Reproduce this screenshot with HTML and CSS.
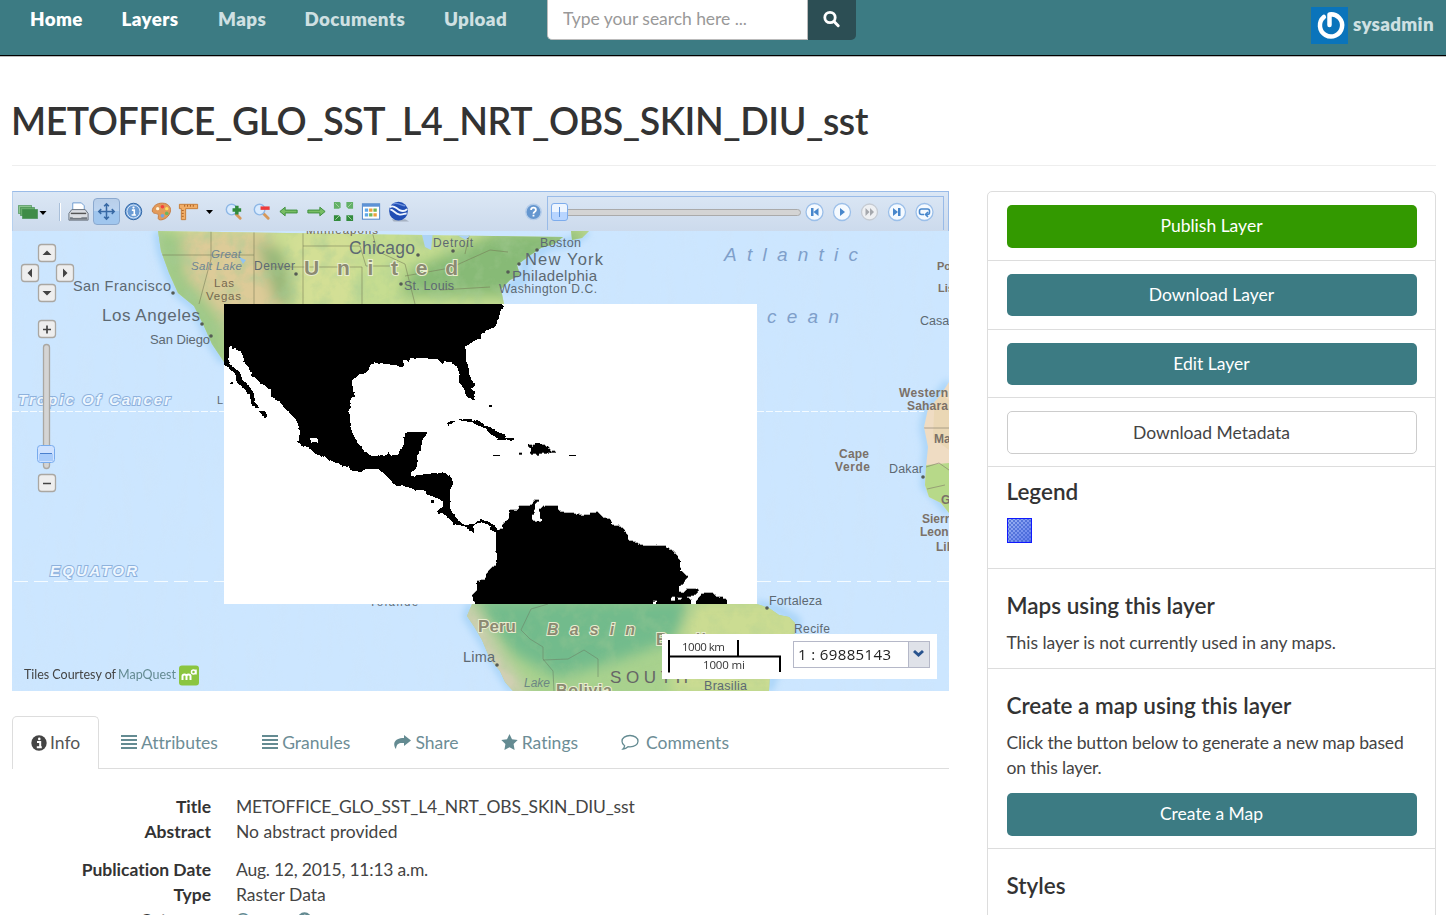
FILE: index.html
```html
<!DOCTYPE html>
<html lang="en">
<head>
<meta charset="utf-8">
<title>METOFFICE_GLO_SST_L4_NRT_OBS_SKIN_DIU_sst</title>
<link rel="stylesheet" href="styles.css">
</head>
<body>
<header class="navbar">
  <nav class="nav">
    <a class="on" style="width:54px">Home</a><a class="on" style="width:59px">Layers</a><a style="width:49px">Maps</a><a style="width:102px">Documents</a><a style="width:65px">Upload</a>
  </nav>
  <form class="search">
    <input type="text" placeholder="Type your search here ...">
    <button type="button" aria-label="Search"><svg width="18" height="18" viewBox="0 0 18 18"><circle cx="7" cy="7.500" r="5.200" fill="none" stroke="#fff" stroke-width="2.800"/><path d="M11 11.500l4.200 4.200" stroke="#fff" stroke-width="3" stroke-linecap="round"/></svg></button>
  </form>
  <div class="user">
    <svg width="37" height="37" viewBox="0 0 38 38"><rect width="38" height="38" fill="#0a74bb"/><path d="M13.2 10.200A11.400 11.400 0 1 0 19 7.600V18.500" fill="none" stroke="#fff" stroke-width="4.600" stroke-linecap="round" stroke-linejoin="round"/></svg>
    <span>sysadmin</span>
  </div>
</header>

<div class="page">
  <div class="page-header"><h2>METOFFICE_GLO_SST_L4_NRT_OBS_SKIN_DIU_sst</h2></div>
  <div class="columns">
    <main class="main">
      <section class="viewer">
        <div class="toolbar">
          <span class="cell layers"><svg width="30" height="24" viewBox="0 0 30 24"><g stroke="#3c8a49" stroke-opacity=".6"><rect x="1.500" y="5.500" width="13" height="8" fill="#8cc48e"/><rect x="3.500" y="7.500" width="14" height="8" fill="#69ad6c"/><rect x="5.500" y="9.500" width="15" height="9" fill="#3f8c48"/></g><path d="M22.500 11h7l-3.500 4z" fill="#000"/></svg></span>
          <span class="sep"></span>
          <span class="cell"><svg viewBox="0 0 24 24"><path d="M6 12V3h9l3 3v6z" fill="#fff" stroke="#6d9bd0"/><path d="M5 10h14l3 4v7H2v-7z" fill="#d9dde2" stroke="#66717d"/><path d="M4 14h16" stroke="#555" stroke-width="1.500"/><path d="M3 18h18v2.500H3z" fill="#737a82"/><path d="M6 18h9" stroke="#eee"/></svg></span>
          <span class="cell active"><svg viewBox="0 0 24 24"><path d="M12 4v16M4 12h16M9.500 6.500L12 4l2.500 2.500M9.500 17.500L12 20l2.500-2.500M6.500 9.500L4 12l2.500 2.500M17.500 9.500L20 12l-2.500 2.500" fill="none" stroke="#3869a4" stroke-width="1.600"/></svg></span>
          <span class="cell"><svg viewBox="0 0 24 24"><circle cx="12" cy="12" r="8.600" fill="#6b9cd5" stroke="#2e64a4"/><circle cx="12" cy="12" r="6.800" fill="none" stroke="#dceafa"/><path d="M10.300 10.600h2.500v4.800M10 15.600h4.500" fill="none" stroke="#fff" stroke-width="1.700"/><circle cx="12" cy="7.900" r="1.200" fill="#fff"/></svg></span>
          <span class="cell"><svg viewBox="0 0 24 24"><path d="M2.500 10C4 5 9 2.500 15 3.500c5 1 7.500 5 6 9.500-2 6-8 8.500-11.500 7.500-2-1 0-4-1-5.500-1.500-1.500-7 0-6-5z" fill="#e29a5b" stroke="#c57b42"/><circle cx="8" cy="9" r="1.700" fill="#fff5d8"/><circle cx="13" cy="7" r="1.900" fill="#f5423b"/><circle cx="17.500" cy="9" r="1.800" fill="#ffe15b"/><circle cx="17.500" cy="14" r="1.900" fill="#70b45f"/><circle cx="13" cy="16.500" r="1.900" fill="#75a5e1"/></svg></span>
          <span class="cell"><svg viewBox="0 0 24 24"><path d="M2.500 4.500h19v4.500H9v11.500H4.500V9h-2z" fill="#f1ae68" stroke="#c57c37"/><path d="M8 5v2M11 5v2M14 5v2M17 5v2M5 11h2M5 14h2M5 17h2" stroke="#a95e22"/></svg></span>
          <span class="caret"><svg width="8" height="5"><path d="M0 0h7l-3.500 4z"/></svg></span>
          <span class="cell"><svg viewBox="0 0 24 24"><path d="M14 14l5 5" stroke="#d6985a" stroke-width="3" stroke-linecap="round"/><circle cx="10" cy="10" r="5.500" fill="#d8ebff" stroke="#8fb8e6" stroke-width="1.500"/><path d="M15.500 6v9M11 10.500h9" stroke="#318a3b" stroke-width="3.600"/></svg></span>
          <span class="cell"><svg viewBox="0 0 24 24"><path d="M14 14l5 5" stroke="#d6985a" stroke-width="3" stroke-linecap="round"/><circle cx="10" cy="10" r="5.500" fill="#d8ebff" stroke="#8fb8e6" stroke-width="1.500"/><path d="M11 8.500h9.500" stroke="#ee3b3b" stroke-width="3.600"/></svg></span>
          <span class="cell"><svg viewBox="0 0 24 24"><path d="M3 12l5.500-4.500v3H21v3H8.500v3z" fill="#78bd65" stroke="#3c8e3c"/></svg></span>
          <span class="cell"><svg viewBox="0 0 24 24"><path d="M21 12l-5.500-4.500v3H3v3h12.500v3z" fill="#78bd65" stroke="#3c8e3c"/></svg></span>
          <span class="cell"><svg viewBox="0 0 24 24"><g fill="#62b067"><path d="M2 2h6l1 1v5l-2 1H2zM15 2h7v7h-5l-2-2z"/><path d="M2 16h5l2 2v4H2zM15 16h7v6h-7z" fill="#328b3c"/></g><path d="M3.500 3.500l4 4M20.500 3.500l-4 4M3.500 20.500l4-4M20.500 20.500l-4-4" stroke="#a5d3a0"/></svg></span>
          <span class="cell"><svg viewBox="0 0 24 24"><rect x="2.500" y="4" width="18" height="16" fill="#fff" stroke="#4b83c8"/><path d="M2.500 5.500h18" stroke="#5d92d6" stroke-width="3"/><path d="M5 10.500h3.500M5 15.500h3.500" stroke="#5fa8e8" stroke-width="3.500"/><path d="M9.500 10.500H13M14 15.500h3.500" stroke="#eea13d" stroke-width="3.500"/><path d="M14 10.500h3.500M9.500 15.500H13" stroke="#73b653" stroke-width="3.500"/></svg></span>
          <span class="cell"><svg viewBox="0 0 24 24"><path d="M5 20h14l4 2.500H7z" fill="#8a94a3" opacity=".6"/><circle cx="12" cy="11.500" r="9.800" fill="#214eb4"/><path d="M3 7.500c4-3 6 1 10 3s6 1 8-1M3.500 10c3 0 5 4 9 5 3 1 6-1 8-1" stroke="#eef5ff" stroke-width="2" fill="none"/><path d="M6 4c5-2 9 2 13 2" stroke="#6b90dc" stroke-width="1.500" fill="none"/></svg></span>
          <span class="spacer"></span>
          <span class="cell"><svg viewBox="0 0 24 24"><circle cx="12" cy="12.500" r="8" fill="#6496cf" stroke="#b5cdea" stroke-width="1.500"/><path d="M9.500 10.500c0-3.300 5-3.300 5 0 0 2-2.500 1.500-2.500 3.800M12 15.500v1.800" fill="none" stroke="#fff" stroke-width="1.900"/></svg></span>
          <div class="time">
            <div class="slide"><span class="thumb"></span></div>
            <svg class="play" width="132" height="24" viewBox="0 0 132 24"><g fill="#f5faff" stroke="#9bbfe9" stroke-width="1.300"><circle cx="10.500" cy="12" r="8.500"/><circle cx="38" cy="12" r="8.500"/><circle cx="65.500" cy="12" r="8" fill="#eef0f3" stroke="#c5cbd3"/><circle cx="93" cy="12" r="8.500"/><circle cx="120.500" cy="12" r="8.500"/></g><g fill="#4887cc"><path d="M7 8h2.500v8H7zM14.500 8v8l-5-4zM36 8l5 4-5 4zM89 8l5 4-5 4zM94 8h2.500v8h-2.500z"/><path d="M61.500 8l4 4-4 4zM66 8l4 4-4 4z" fill="#a5a8ad"/></g><path d="M120 14.500h-2.500q-2 0-2-2v-1.500q0-2 2-2h6q2 0 2 2v1.500q0 2-2 2H122m2-2.500l-2.500 2.500 2.500 2.500" fill="none" stroke="#4887cc" stroke-width="1.600"/></svg>
          </div>
        </div>
        <svg class="map" width="937" height="460" viewBox="12 231 937 460">
          <defs>
            <filter id="b6" x="-40%" y="-40%" width="180%" height="180%"><feGaussianBlur stdDeviation="7"/></filter>
            <filter id="b3"><feGaussianBlur stdDeviation="3.500"/></filter>
            <filter id="relief" x="0" y="0" width="100%" height="100%"><feTurbulence type="fractalNoise" baseFrequency=".06" numOctaves="4" seed="4"/><feColorMatrix values="0 0 0 0 .38  0 0 0 0 .6  0 0 0 0 .3  2.200 0 0 0 -.95"/></filter>
            <filter id="waves" x="0" y="0" width="100%" height="100%"><feTurbulence type="fractalNoise" baseFrequency=".09 .02" numOctaves="3" seed="9"/><feColorMatrix values="0 0 0 0 .62  0 0 0 0 .78  0 0 0 0 .95  1.400 0 0 0 -.56"/></filter>
            <filter id="rag" x="-2%" y="-2%" width="104%" height="104%"><feTurbulence type="fractalNoise" baseFrequency=".22" numOctaves="1" seed="2"/><feDisplacementMap in="SourceGraphic" scale="3" xChannelSelector="R" yChannelSelector="G"/></filter>
            <clipPath id="na"><path d="M158 231l3 20 8 22 9 20 16 13 9 18 9 20 12 18V304h280l-3-15 9-9 10-5-3-10 12-9 12-8 13-4 9-7zM572 240l10-2 7-7h-18z"/></clipPath>
            <clipPath id="sa"><path d="M472 604l-5 12 8 12 7 12 8 19 10 12 5 11 8 9h256l1-20 7-16 17-12 1-20-6-6-10-2-10-7-12-4z"/></clipPath>
            <clipPath id="af"><path d="M949 382l-9 14-12 13-4 18 4 20-2 20-1 18 4 12 12 6 8 10z"/></clipPath>
            <clipPath id="raster"><rect x="224" y="304" width="533" height="300"/></clipPath>
          </defs>
          <rect x="12" y="231" width="937" height="460" fill="#cce6ff"/>
          <rect x="12" y="231" width="937" height="460" filter="url(#waves)" opacity=".6"/>
          <g fill="none" stroke="#a9d4f8" stroke-width="9" filter="url(#b3)"><path d="M158 231l3 20 8 22 9 20 16 13 18 38 12 18M505 290l20-12 0-18 25-14 22-4 15-11M472 604l-5 12 15 24 18 31 13 20M757 604l22 6 17 10-1 18-18 30-9 23M949 382l-21 27-4 18 4 20-3 38 16 18 8 10"/></g>
          <g clip-path="url(#na)">
            <rect x="150" y="231" width="450" height="135" fill="#c6dd91"/>
            <g filter="url(#b6)"><path d="M150 231h35l10 35 30 30 5 70h-40z" fill="#9fc987"/><path d="M182 231h85l35 60-60 60-25-40-30-35z" fill="#ddcb98"/><path d="M255 240l28 10 18 54h-25z" fill="#96b779"/><path d="M285 231h70v80h-60z" fill="#d3df95"/><path d="M410 270l90-39h90l-70 65h-120z" fill="#87ba76"/></g>
            <rect x="150" y="231" width="450" height="135" filter="url(#relief)" opacity=".55"/>
            <path d="M161 255h93M211 231v28l-12 45M254 231v73M303 231v73M303 246h57l6 20h28M272 267h90v37M372 231l5 20 28 13 10 40M405 276l45-8 40-18 18 2M440 290l50-3M470 231l-5 23" fill="none" stroke="#747a56" stroke-opacity=".55"/>
            <path d="M421 231l4 16 6 3 2-19zM450 231l16 9 8-9z" fill="#acd3f5"/>
            <path d="M239 257l7 3-3 4z" fill="#91c4f1"/>
          </g>
          <g clip-path="url(#sa)">
            <rect x="460" y="600" width="350" height="95" fill="#a9d28e"/>
            <g filter="url(#b6)"><path d="M475 600h220l-22 40-55 20-60 18-45-25z" fill="#72bb8c"/><path d="M690 600h120v95h-140z" fill="#cbdc92"/><path d="M455 605l18 0 28 50 30 40h-30z" fill="#d5cfb7"/></g>
            <rect x="460" y="600" width="350" height="95" filter="url(#relief)" opacity=".35"/>
            <path d="M548 604l-17 5-10 21 9 9 13 8v12l10 12 1 20M543 660l25-1 16-9 14 9v18" fill="none" stroke="#6d8569" stroke-opacity=".6"/>
          </g>
          <g clip-path="url(#af)"><rect x="915" y="380" width="40" height="140" fill="#efdcc3"/><path d="M915 466l34-3v60h-34z" fill="#b7d989"/><path d="M935 390l14 10v50l-16-12z" fill="#ead7b5"/><path d="M924 428h25M926 467l13-4 10 7M927 489l18-4" fill="none" stroke="#817a68" stroke-opacity=".6"/></g>
          <path d="M12 411.500h212M757 411.500h167" stroke="#f4fbff" stroke-dasharray="7 2"/>
          <path d="M14 581.500h210M757 581.500h192" stroke="#f4fbff" stroke-dasharray="14 6"/>
          <g class="lbl">
            <g font-size="11.500" fill="#75684f"><text x="306" y="234" textLength="72">Minneapolis</text><text x="211" y="258" font-style="italic" textLength="30" fill="#6d8594">Great</text><text x="191" y="270" font-style="italic" textLength="51" fill="#6d8594">Salt Lake</text><text x="214" y="287" textLength="20">Las</text><text x="206" y="300" textLength="35">Vegas</text></g>
            <text x="254" y="270" font-size="12" textLength="41">Denver</text><text x="349" y="254" font-size="17.500" textLength="66">Chicago</text><text x="433" y="247" font-size="12" textLength="40">Detroit</text><text x="540" y="247" font-size="12.500" textLength="41">Boston</text><text x="525" y="265" font-size="16.500" textLength="78">New York</text><text x="512" y="281" font-size="15" textLength="85">Philadelphia</text><text x="499" y="293" font-size="12" textLength="98">Washington D.C.</text><text x="404" y="290" font-size="12.500" textLength="50">St. Louis</text>
            <text x="73" y="291" font-size="14.500" textLength="98">San Francisco</text><text x="102" y="321" font-size="17" textLength="98">Los Angeles</text><text x="150" y="344" font-size="13" textLength="60">San Diego</text><text x="217" y="404" font-size="11">L</text>
            <text class="country" x="304" y="275" font-size="21" textLength="154">United</text>
            <g font-style="italic" fill="#7f9fca"><text x="724" y="261" font-size="19" textLength="134">Atlantic</text><text x="767" y="323" font-size="19" textLength="72">cean</text></g>
            <g class="lat" font-size="15" font-style="italic" font-weight="bold"><text x="18" y="405" textLength="152">Tropic Of Cancer</text><text x="50" y="576" textLength="87">EQUATOR</text></g>
            <g fill="#7b7168" font-weight="bold" font-size="12"><text x="937" y="270" font-size="11">Po</text><text x="938" y="292" font-size="11">Lis</text><text x="899" y="397" textLength="49">Western</text><text x="907" y="410" textLength="41">Sahara</text><text x="934" y="443">Ma</text><text x="839" y="458" textLength="30">Cape</text><text x="835" y="471" textLength="35">Verde</text><text x="941" y="504">G</text><text x="922" y="523">Sierr</text><text x="920" y="536">Leon</text><text x="936" y="551">Lil</text></g>
            <text x="920" y="325" font-size="12.500">Casa</text><text x="889" y="473" font-size="12.500" textLength="34">Dakar</text><text x="769" y="605" font-size="12.500" textLength="53">Fortaleza</text><text x="794" y="633" font-size="12" textLength="36">Recife</text>
            <text x="369" y="606" font-size="11" textLength="49">Yolande</text><text class="country" x="478" y="632" font-size="17" textLength="38">Peru</text><text class="country" x="547" y="635" font-size="16" font-style="italic" textLength="88">Basin</text><text class="country" x="656" y="645" font-size="16" textLength="50">Brazil</text><text x="463" y="662" font-size="14.500" textLength="32">Lima</text><text x="524" y="687" font-size="12" font-style="italic" textLength="26" fill="#6c8783">Lake</text><text class="country" x="556" y="696" font-size="16" textLength="56">Bolivia</text><text x="610" y="683" font-size="17" textLength="78" fill="#666">SOUTH</text><text x="704" y="690" font-size="12.500" textLength="43">Brasilia</text>
            <g fill="#555c55"><circle cx="173" cy="293" r="1.800"/><circle cx="202" cy="324" r="1.800"/><circle cx="211" cy="336" r="1.800"/><circle cx="296" cy="274" r="1.800"/><circle cx="401" cy="284" r="1.800"/><circle cx="418" cy="255" r="1.800"/><circle cx="453" cy="251" r="1.800"/><circle cx="537" cy="250" r="1.800"/><circle cx="519" cy="264" r="1.800"/><circle cx="508" cy="272" r="1.800"/><circle cx="923" cy="477" r="1.800"/><circle cx="767" cy="608" r="1.800"/><circle cx="497" cy="665" r="1.800"/></g>
          </g>
          <rect x="224" y="304" width="533" height="300" fill="#fff"/>
          <g clip-path="url(#raster)" shape-rendering="crispEdges">
          <g filter="url(#rag)">
            <g transform="translate(220 295) scale(.33333)">
              <path d="M0 10H842V30L852 38 842 45 835 80 822 98 795 108 778 130 750 145 738 155 737 195 745 215 748 240 760 262 762 275 752 280 765 290 765 300 760 318 750 308 737 300 735 288 725 270 718 262V235L713 220 700 208 690 200 672 202 668 208 655 193 620 190 570 190 566 200 555 193 550 200 552 214 540 217 530 210 505 210 490 205 478 203 450 208 447 225 435 235 415 238 405 245 397 260 398 285 405 305 395 310 388 345 390 390 400 420 410 440 430 465 455 484 500 480 505 473 512 482 535 480 540 462 550 455 555 415 570 410 622 410 618 422 605 438 604 465 590 485 590 515 575 530 572 543 600 540 628 535 678 535 695 550 698 570 690 590 690 640 705 665 730 688 760 688 770 680 785 675 805 680 825 692 832 705 845 705 838 716 820 708 808 704 812 694 800 688 785 682 768 686 760 695 762 714 755 708 742 704 742 696 725 692 705 688 690 674 675 662 668 652 655 658 652 650 660 640 670 635 670 620 650 608 620 598 615 585 590 585 560 575 530 572 515 560 500 545 485 530 475 522 440 522 420 531 400 527 385 517 355 508 325 493 310 485 285 477 270 462 245 452 235 442 238 425 240 410 235 390 225 370 195 340 180 322 155 308 152 290 135 270 120 262 95 240 85 215 75 205 68 180 62 168 50 165 45 158 38 162 35 153 28 155 28 208 45 220 60 232 68 255 85 270 100 292 105 318 118 340 107 340 95 330 88 295 72 280 50 262 48 238 28 218 0 205Z"/>
              <path d="M120 348l12 2 8 8v8l-5 6-4-12zM32 260h7v7h-7zM634 616h8v7h-8zM808 330h7v7h-7zM682 385l10-8 15 0-10 8-12 8zM718 371l35 2 28 6 10 12 20 6 22 14 22 8 5 10h22v7h-50l-3-10-20-10-12-16-22-8-16-10-40-6z"/>
              <path d="M271 428h22v12h-22z" fill="#fff"/>
            </g>
            <g transform="translate(460 380) scale(.33333)">
              <path d="M109 455L125 445V433L145 420 150 390 175 388 180 378 215 375 222 362 236 356 236 364 226 370 226 385 217 405V420L228 425 242 424 240 395 235 388 255 378 290 378 298 392 318 398 345 398 350 405 388 405 392 398 412 396 430 412 452 418 458 435 475 438 490 445 503 465 505 480 525 485 545 495 575 498 615 498 635 510 655 528 660 540 662 570 672 580 685 590 675 602 668 612 660 620 655 632 670 640 685 625 717 628 712 640 698 648 680 650 695 660 690 690H45L40 662 36 645 50 632 50 602 75 598 80 580 92 565 108 555 112 535 109 515ZM708 664l18-24 32-2 12 10 30 10v30h-92zM204 192l15 4 10-5 22 2 10 8 12 10 16 3v3l-20 1-10 6-8-5-12 1-3 8-6-2-5-7-8 6-6-5 2-16-9-5zM178 218h8v7h-8z"/>
              <path d="M635 650l12 2-4 10h-10zM655 652l12 2-5 6h-10zM578 663h14v10h-14z" fill="#fff"/>
            </g>
          </g>
          <path d="M493 455h7v1h-7zM569 455h7v1h-7z"/>
          </g>
          <g class="controls">
            <g fill="#eee" stroke="#aaa7a2" stroke-width="1.300"><rect x="38.500" y="244.500" width="17" height="17" rx="3"/><rect x="21.500" y="264.500" width="17" height="17" rx="3"/><rect x="56.500" y="264.500" width="17" height="17" rx="3"/><rect x="38.500" y="284.500" width="17" height="17" rx="3"/><rect x="38.500" y="320.500" width="17" height="17" rx="3"/><rect x="38.500" y="474.500" width="17" height="17" rx="3"/><rect x="43.500" y="344.500" width="6" height="124" rx="3" fill="#d4d4d4"/></g>
            <path d="M42.500 255l4.500-4.500 4.500 4.500zM32 268.500v9l-4.500-4.500zM63 268.500v9l4.500-4.500zM42.500 291l4.500 4.500 4.500-4.500z" fill="#444"/><path d="M43 329.500h8M47 325.500v8M43 483.500h8" stroke="#444" stroke-width="1.700"/>
            <rect x="37.500" y="445.500" width="17" height="17" rx="3" fill="#cfe2ff" stroke="#78abed"/><rect x="39" y="454" width="14" height="7" fill="#a9ccfb"/><path d="M40 453.500h12" stroke="#4a80ce"/>
          </g>
          <text x="24" y="679" class="credit" textLength="92">Tiles Courtesy of</text><text x="118" y="679" class="credit link" textLength="58">MapQuest</text>
          <rect x="179" y="665.500" width="20" height="20" rx="3" fill="#8bc540"/><path d="M182.500 680v-4q0-1.500 2-1.500t2 1.500v4m0-4q0-1.500 2-1.500t2 1.500v4" fill="none" stroke="#fff" stroke-width="2"/><circle cx="193.500" cy="672" r="2" fill="none" stroke="#fff" stroke-width="1.500"/><path d="M196 669.500v5" stroke="#fff" stroke-width="1.500"/>
          <rect x="662" y="634" width="275" height="45" fill="#fff"/>
          <path d="M669 640v32.500M668 656.500h112v15.500M738 640v16" fill="none" stroke="#000" stroke-width="2"/>
          <g class="scale"><text x="682" y="651" textLength="43">1000 km</text><text x="703" y="669" textLength="42">1000 mi</text></g>
          <rect x="793.500" y="641.500" width="115" height="26" fill="#fff" stroke="#b5b8c8"/><rect x="908.500" y="641.500" width="21" height="26" fill="#dfe2e9" stroke="#b5b8c8"/><path d="M914 651l4.500 4 4.500-4" fill="none" stroke="#28538e" stroke-width="3"/>
          <text class="ratio" x="798" y="660" textLength="93">1 : 69885143</text>
        </svg>
      </section>

      <ul class="tabs">
        <li class="current"><svg width="16" height="16" viewBox="0 0 16 16"><circle cx="8" cy="8" r="7.700" fill="#444"/><path d="M6 7h3.200v5M5.800 12.300h5" stroke="#fff" stroke-width="2" fill="none"/><circle cx="8.300" cy="3.900" r="1.300" fill="#fff"/></svg><span style="width:30px">Info</span></li>
        <li><svg width="16" height="16" viewBox="0 0 16 16"><path d="M0 2h16M0 6h16M0 10h16M0 14h16" stroke="#648b92" stroke-width="2"/></svg><span class="attr" style="width:80px">Attributes</span></li>
        <li><svg width="16" height="16" viewBox="0 0 16 16"><path d="M0 2h16M0 6h16M0 10h16M0 14h16" stroke="#648b92" stroke-width="2"/></svg><span style="width:70px">Granules</span></li>
        <li><svg width="18" height="16" viewBox="0 0 18 16"><path d="M11 1l7 5.500-7 5.500V9C6 8.500 3.500 9.500 3 15 0 11 0 4 11 4z" fill="#648b92"/></svg><span style="width:44px">Share</span></li>
        <li><svg width="17" height="16" viewBox="0 0 17 16"><path d="M8.500 0l2.500 5.300 5.700.8-4.100 4 1 5.800-5.100-2.700-5.100 2.700 1-5.800-4.100-4 5.700-.8z" fill="#648b92"/></svg><span style="width:58px">Ratings</span></li>
        <li><svg width="18" height="16" viewBox="0 0 18 16"><path d="M9 1.500c4.500 0 8 2.500 8 5.700s-3.500 5.600-8 5.600l-2-.1c-1.500 1.400-3 2.100-5 2.300 1-1 1.500-2 1.600-3.300C2 10.700 1 9 1 7.200c0-3.200 3.500-5.700 8-5.700z" fill="none" stroke="#648b92" stroke-width="1.300"/></svg><span class="wide" style="width:87px">Comments</span></li>
      </ul>

      <dl><dt>Title</dt><dd>METOFFICE_GLO_SST_L4_NRT_OBS_SKIN_DIU_sst</dd><dt>Abstract</dt><dd class="loose">No abstract provided</dd></dl>
      <dl><dt>Publication Date</dt><dd class="date">Aug. 12, 2015, 11:13 a.m.</dd><dt>Type</dt><dd class="loose">Raster Data</dd><dt>Category</dt><dd class="cat">Ocean <svg width="15" height="15" viewBox="0 0 16 16"><circle cx="8" cy="8" r="7.700" fill="#648b92"/><path d="M6 7h3.200v5" stroke="#fff" stroke-width="2" fill="none"/><circle cx="8.300" cy="3.900" r="1.300" fill="#fff"/></svg></dd></dl>
    </main>

    <aside class="side">
      <div class="item act"><a class="btn green">Publish Layer</a></div>
      <div class="item act"><a class="btn">Download Layer</a></div>
      <div class="item act"><a class="btn">Edit Layer</a></div>
      <div class="item act"><a class="btn plain">Download Metadata</a></div>
      <div class="item legend"><h4>Legend</h4><svg width="25" height="25" viewBox="0 0 25 25"><defs><pattern id="chk" width="4" height="4" patternUnits="userSpaceOnUse"><path d="M0 0h2v2H0zM2 2h2v2H2z" fill="#3a5ed0"/></pattern><linearGradient id="lg" x1="0" y1="0" x2="1" y2="1"><stop stop-color="#9db5f0"/><stop offset="1" stop-color="#607bee"/></linearGradient></defs><rect width="25" height="25" fill="#1018ff"/><rect x="1" y="1" width="23" height="23" fill="url(#lg)"/><rect x="1" y="1" width="23" height="23" fill="url(#chk)" opacity=".65"/></svg></div>
      <div class="item using"><h4>Maps using this layer</h4><p>This layer is not currently used in any maps.</p></div>
      <div class="item create"><h4>Create a map using this layer</h4><p class="tight">Click the button below to generate a new map based on this layer.</p><a class="btn">Create a Map</a></div>
      <div class="item styles"><h4>Styles</h4></div>
    </aside>
  </div>
</div>
</body>
</html>
```
FILE: styles.css
```css
* { box-sizing: border-box; }
html, body { height: 100%; overflow: hidden; }
body { margin: 0; background: #fff; color: #444; font: 17.5px/25px Lato, sans-serif; font-variant-ligatures: none; }
h2, h4, p, dl, dd, ul { margin: 0; }
svg { flex: none; }

.navbar { height: 56px; display: flex; align-items: flex-start; background: #3c7b83; border-bottom: 1px solid #000; box-shadow: 0 1px 0 #bbb; padding: 0 10px 0 30px; }
.nav { display: flex; gap: 37.5px; padding-top: 6px; width: 517px; flex: none; }
.nav a { color: #cfe0e2; font-weight: 800; font-size: 18.75px; letter-spacing: .4px; white-space: nowrap; }
.nav a.on { color: #fff; }
.search { display: flex; height: 40px; }
.search input { width: 261px; border: 1px solid #bbb; border-top: 0; border-radius: 0 0 0 5px; background: #fff; padding: 0 15px 2px; font: 17.5px Lato, sans-serif; letter-spacing: -.05px; outline: 0; }
.search input::placeholder { color: #999; }
.search button { width: 48px; border: 0; border-radius: 0 0 5px 0; background: #2c4e54; padding: 0 0 2px; display: grid; place-items: center; }
.user { margin-left: auto; display: flex; align-items: center; gap: 5px; padding-top: 7px; color: #cfe0e2; font-weight: 800; font-size: 18.75px; letter-spacing: .3px; }
.user span { width: 83px; padding-bottom: 4px; white-space: nowrap; }

.page { padding: 0 10px 0 12px; }
.page-header { height: 110px; border-bottom: 1px solid #eee; padding-top: 42px; }
.page-header h2 { font-size: 37.5px; line-height: 45px; font-weight: 600; letter-spacing: -.44px; color: #333; white-space: nowrap; margin-left: -1px; }
.columns { display: flex; justify-content: space-between; padding-top: 25px; }
.main { width: 937px; }
.side { width: 449px; height: 740px; border: 1px solid #ddd; border-radius: 5px 5px 0 0; }

.viewer { height: 500px; }
.toolbar { height: 40px; display: flex; align-items: center; background: linear-gradient(#dbe7f5, #ccdaec); border: 1px solid #99bbe8; border-bottom: 0; border-left-color: #b6d0ee; padding-right: 4px; }
.cell { width: 27.5px; height: 27px; flex: none; display: grid; place-items: center; }
.cell svg { width: 23px; height: 23px; }
.cell.layers { width: 41px; padding-right: 4px; }
.cell.layers svg { width: 30px; height: 24px; }
.sep { width: 1px; height: 18px; margin: 0 5px; background: #a9bfd9; box-shadow: 1px 0 #fff; }
.cell.active { border: 1px solid #8ba9cf; border-radius: 4px; background: linear-gradient(#b8cee9, #bcd5f1 50%, #a0c6ee 50%); }
.caret { width: 17.5px; display: grid; place-items: center; padding: 2px 3px 0 0; }
.spacer { flex: 1; }
.time { width: 397px; height: 34px; margin-top: 3px; border: 1px solid #99bbe8; border-bottom: 0; display: flex; align-items: center; padding: 0 0 3px 4px; }
.slide { width: 249px; height: 7px; margin-right: 3px; border: 1px solid #aaa; border-radius: 4px; background: #d4d4d4; display: flex; align-items: center; }
.thumb { width: 17px; height: 18px; margin-left: -2px; flex: none; border: 1px solid #7dacec; border-radius: 3px; background: linear-gradient(90deg, transparent 7px, #5c93dd 7px 8px, transparent 8px) 0 3px / 100% 10px no-repeat, linear-gradient(#edf5ff 50%, #b8d5ff 50%); }

.map { display: block; }
.lbl { font-family: "Liberation Sans", sans-serif; fill: #5d6972; }
.country { fill: #8c8a72; stroke: #e9eed0; stroke-width: 2px; paint-order: stroke; font-weight: bold; }
.lat { fill: #eef7ff; stroke: #8eb2dd; stroke-width: 2px; paint-order: stroke; }
.credit { font: 12.5px Lato, sans-serif; fill: #444; }
.credit.link { fill: #648b92; }
.scale { font: 11.5px "Open Sans", sans-serif; fill: #333; }
.ratio { font: 15px "Open Sans", sans-serif; fill: #222; }

.tabs { list-style: none; display: flex; gap: 2.5px; height: 53px; margin-top: 25px; padding: 0; border-bottom: 1px solid #ddd; }
.tabs li { display: flex; align-items: center; gap: 4px; padding: 0 19.4px; height: 52px; color: #6d8d96; white-space: nowrap; }
.tabs li.current { height: 53px; padding: 0 18px 1px; gap: 3px; border: 1px solid #ddd; border-bottom: 0; border-radius: 5px 5px 0 0; background: #fff; color: #555; }
.tabs .wide { padding-left: 3px; }

dl { display: grid; grid-template-columns: 199px 1fr; column-gap: 25px; padding-top: 12.5px; }
.tabs + dl { padding-top: 25px; }
dt { text-align: right; font-weight: 700; color: #333; }
dd { letter-spacing: -.17px; }
dd.loose { letter-spacing: 0; }
dd.date { letter-spacing: -.23px; }
.cat { color: #648b92; }
.cat svg { margin-left: 8px; vertical-align: -1px; }

.item { border-bottom: 1px solid #ddd; padding: 0 18.5px; }
.act { height: 68.75px; padding-top: 13px; }
.btn { display: block; height: 42.5px; line-height: 42.5px; border-radius: 5px; background: #3c7b83; color: #fff; text-align: center; }
.btn.green { background: #339900; }
.btn.plain { background: #fff; border: 1px solid #ccc; color: #444; line-height: 41px; }
h4 { font-size: 22.5px; line-height: 25px; font-weight: 600; color: #333; }
.legend { height: 102px; padding-top: 12px; }
.legend svg { display: block; margin-top: 14px; }
.using { height: 100px; padding-top: 24px; }
.using p, .create p { margin-top: 12px; letter-spacing: -.06px; }
.create p.tight { letter-spacing: -.13px; }
.create { height: 180px; padding-top: 24px; }
.create .btn { margin-top: 13px; }
.styles { padding-top: 24px; border: 0; }
```
